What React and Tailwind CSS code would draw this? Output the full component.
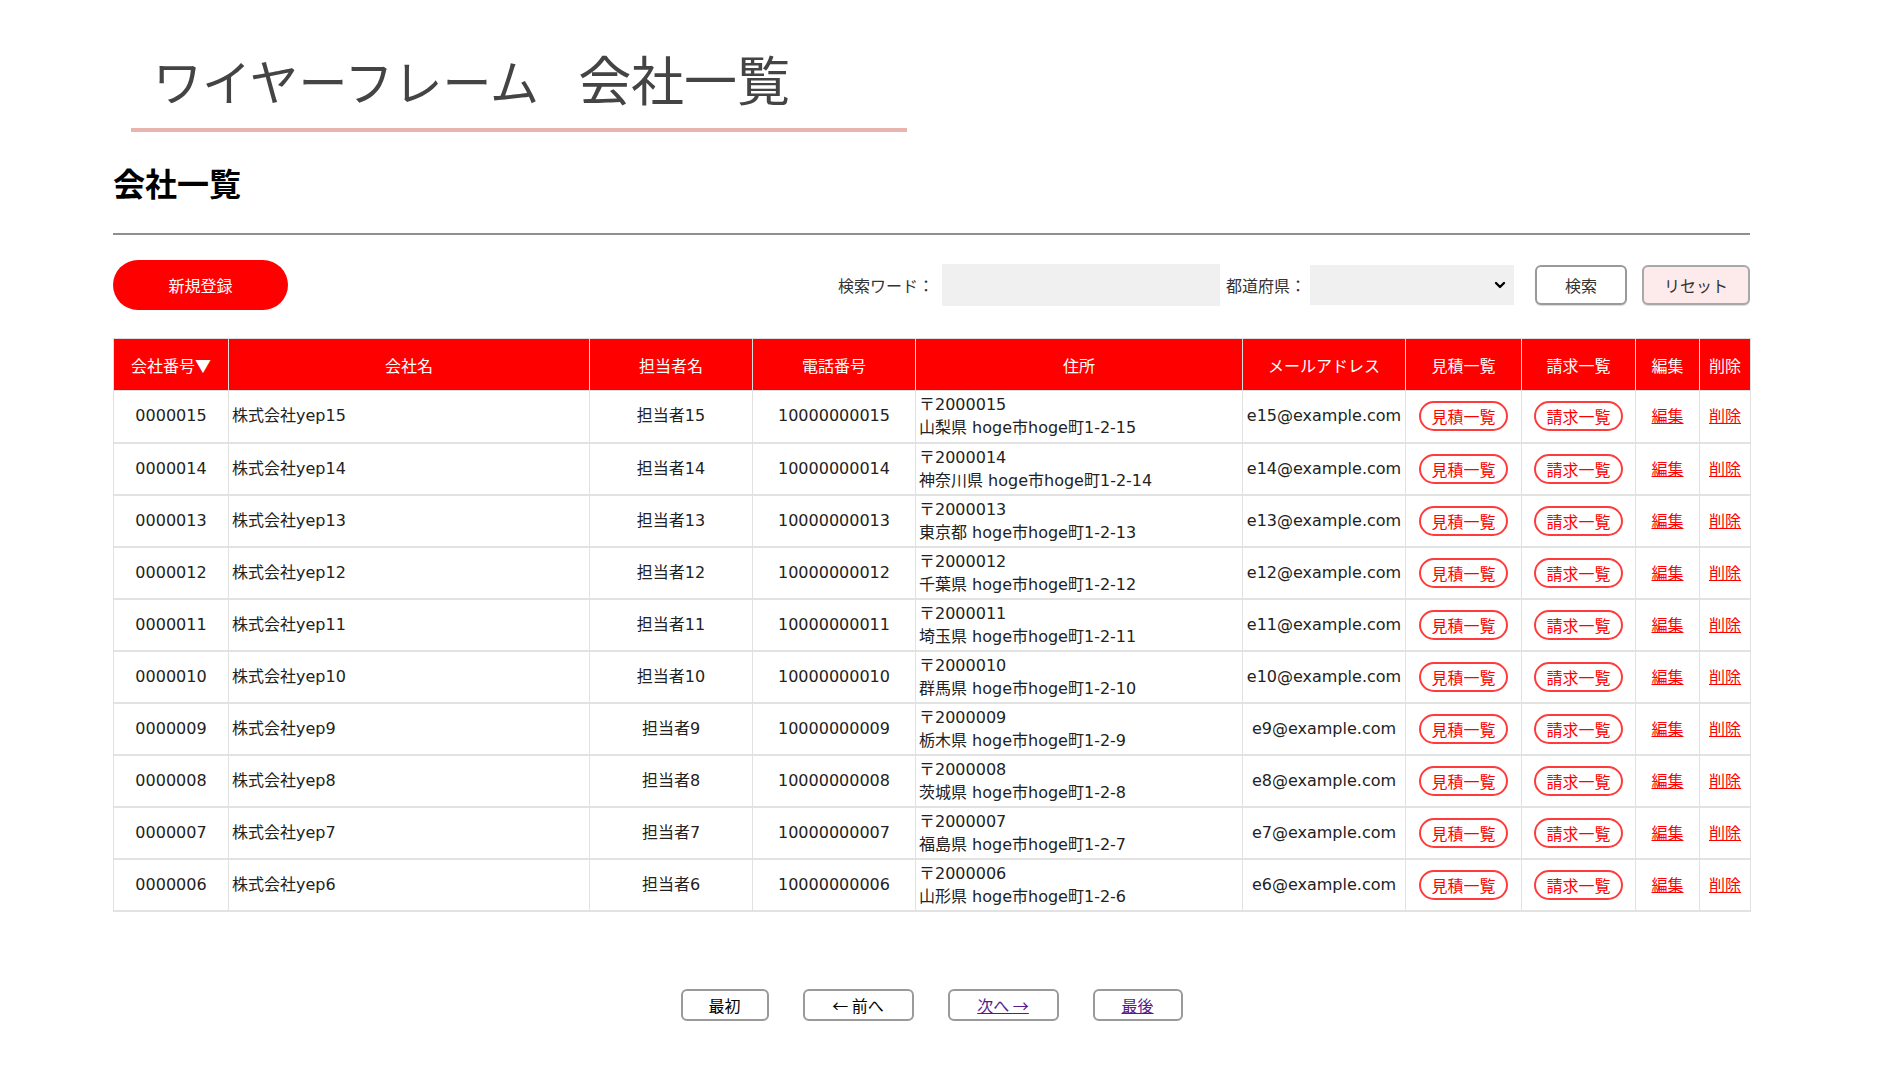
import { ChevronDown } from "lucide-react";

const prefs = {
  15: "山梨県",
  14: "神奈川県",
  13: "東京都",
  12: "千葉県",
  11: "埼玉県",
  10: "群馬県",
  9: "栃木県",
  8: "茨城県",
  7: "福島県",
  6: "山形県",
};

const companies = [15, 14, 13, 12, 11, 10, 9, 8, 7, 6].map((n) => ({
  id: String(n).padStart(7, "0"),
  name: `株式会社yep${n}`,
  person: `担当者${n}`,
  tel: "1" + String(n).padStart(10, "0"),
  zip: "〒" + (2000000 + n),
  address: `${prefs[n]} hoge市hoge町1-2-${n}`,
  email: `e${n}@example.com`,
}));

const body = { fontFamily: '"DejaVu Sans", "Noto Sans CJK JP", sans-serif' };
const jp = { fontFamily: '"Noto Sans CJK JP", sans-serif' };

const App = () => {
  return (
    <div className="min-h-screen bg-white text-[#222]" style={body}>
      {/* page title */}
      <div className="ml-[131px] w-[776px] border-b-4 border-[#e8b5ae] pl-[22px] pt-[42px] pb-[14px]">
        <h1 className="h-[72px] text-[49px] leading-[72px] font-normal text-[#444] whitespace-nowrap" style={jp}>
          ワイヤーフレーム
          <span className="ml-[39px] text-[53px]">会社一覧</span>
        </h1>
      </div>

      <div className="ml-[113px] w-[1637px]">
        <h2 className="mt-[28px] text-[32px] leading-[44px] font-bold text-black" style={jp}>
          会社一覧
        </h2>
        <hr className="mt-[29px] border-0 border-t-2 border-[#8f8f8f]" />

        {/* toolbar */}
        <div className="mt-[25px] flex items-center justify-between">
          <button className="w-[175px] h-[50px] rounded-full bg-[#ff0000] text-white text-[16px]" style={jp}>
            新規登録
          </button>
          <div className="flex items-center text-[16px] text-[#333]" style={jp}>
            <span>検索ワード：</span>
            <input className="ml-[8px] w-[278px] h-[42px] bg-[#f0f0f0] outline-none px-2" />
            <span className="ml-[6px]">都道府県：</span>
            <div className="ml-[4px] w-[204px] h-[40px] bg-[#f0f0f0] flex items-center justify-end pr-[6px]">
              <ChevronDown className="w-[16px] h-[16px] text-black" strokeWidth={3.5} />
            </div>
            <button className="ml-[21px] w-[92px] h-[40px] rounded-[6px] border-2 border-[#9a9a9a] bg-white shadow-[0_1px_1px_rgba(0,0,0,0.15)]">
              検索
            </button>
            <button className="ml-[15px] w-[108px] h-[40px] rounded-[6px] border-2 border-[#a8a8a8] bg-[#fdeaea] shadow-[0_1px_1px_rgba(0,0,0,0.15)]">
              リセット
            </button>
          </div>
        </div>

        {/* table */}
        <table className="mt-[28px] w-[1637px] table-fixed border-collapse text-[16px]">
          <colgroup>
            <col className="w-[115px]" />
            <col className="w-[361px]" />
            <col className="w-[163px]" />
            <col className="w-[163px]" />
            <col className="w-[327px]" />
            <col className="w-[163px]" />
            <col className="w-[116px]" />
            <col className="w-[114px]" />
            <col className="w-[64px]" />
            <col className="w-[51px]" />
          </colgroup>
          <thead>
            <tr className="h-[52px] bg-[#ff0000] text-white" style={jp}>
              {["会社番号▼", "会社名", "担当者名", "電話番号", "住所", "メールアドレス", "見積一覧", "請求一覧", "編集", "削除"].map((h) => (
                <th key={h} className="border border-[#dedede] font-normal text-center p-0">
                  {h}
                </th>
              ))}
            </tr>
          </thead>
          <tbody>
            {companies.map((c) => (
              <tr key={c.id} className="h-[52px]">
                <td className="border-x border-b-2 border-[#e2e2e2] text-center">{c.id}</td>
                <td className="border-x border-b-2 border-[#e2e2e2] pl-[3px]">{c.name}</td>
                <td className="border-x border-b-2 border-[#e2e2e2] text-center">{c.person}</td>
                <td className="border-x border-b-2 border-[#e2e2e2] text-center">{c.tel}</td>
                <td className="border-x border-b-2 border-[#e2e2e2] pl-[3px] py-[2px] leading-[23px]">
                  <div>{c.zip}</div>
                  <div>{c.address}</div>
                </td>
                <td className="border-x border-b-2 border-[#e2e2e2] text-center">{c.email}</td>
                <td className="border-x border-b-2 border-[#e2e2e2] text-center">
                  <button className="w-[89px] h-[30px] rounded-full border-2 border-[#ff3b3b] text-[#ff0000] bg-white" style={jp}>
                    見積一覧
                  </button>
                </td>
                <td className="border-x border-b-2 border-[#e2e2e2] text-center">
                  <button className="w-[89px] h-[30px] rounded-full border-2 border-[#ff3b3b] text-[#ff0000] bg-white" style={jp}>
                    請求一覧
                  </button>
                </td>
                <td className="border-x border-b-2 border-[#e2e2e2] text-center">
                  <a href="#" className="text-[#ff0000] underline" style={jp}>編集</a>
                </td>
                <td className="border-x border-b-2 border-[#e2e2e2] text-center">
                  <a href="#" className="text-[#ff0000] underline" style={jp}>削除</a>
                </td>
              </tr>
            ))}
          </tbody>
        </table>

        {/* pagination */}
        <div className="mt-[77px] flex justify-center gap-[34px] text-[16px]" style={jp}>
          <button className="w-[88px] h-[32px] rounded-[6px] border-2 border-[#9a9a9a] bg-white text-black">最初</button>
          <button className="w-[111px] h-[32px] rounded-[6px] border-2 border-[#9a9a9a] bg-white text-black">← 前へ</button>
          <button className="w-[111px] h-[32px] rounded-[6px] border-2 border-[#9a9a9a] bg-white">
            <span className="text-[#551a8b] underline">次へ →</span>
          </button>
          <button className="w-[90px] h-[32px] rounded-[6px] border-2 border-[#9a9a9a] bg-white">
            <span className="text-[#551a8b] underline">最後</span>
          </button>
        </div>
      </div>
    </div>
  );
};

export default App;
